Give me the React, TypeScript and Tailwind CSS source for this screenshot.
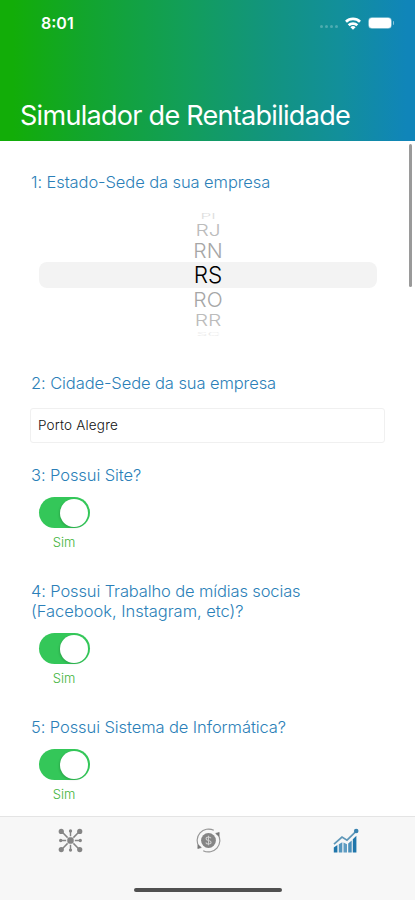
import type { ReactNode } from "react";

const wheel = [
  { code: "PI", row: "h-[10px] text-[#dddddd] text-[18px]", glyph: "leading-[10px] scale-y-[0.42] scale-x-[0.95]" },
  { code: "RJ", row: "h-[18px] text-[#bcbcbc]", glyph: "scale-y-[0.76]" },
  { code: "RN", row: "h-[23px] text-[#a6a6a6]", glyph: "scale-y-[0.96]" },
  { code: "RS", row: "h-[26px] text-black text-[22.5px]", glyph: "" },
  { code: "RO", row: "h-[23px] text-[#a6a6a6]", glyph: "scale-y-[0.96]" },
  { code: "RR", row: "h-[18px] text-[#bcbcbc]", glyph: "scale-y-[0.76]" },
  { code: "SC", row: "h-[10px] text-[#e8e8e8] text-[18px]", glyph: "leading-[10px] scale-y-[0.3] scale-x-[0.95]" },
];

function Question({ children, className = "" }: { children: ReactNode; className?: string }) {
  return (
    <h2 className={`ml-[31px] whitespace-nowrap text-[16.5px] font-light leading-[20px] tracking-[-0.09px] text-[#2b7fb8] ${className}`}>
      {children}
    </h2>
  );
}

function Toggle() {
  return (
    <div className="ml-[39px] w-[51px]">
      <button role="switch" aria-checked="true" className="flex h-[31px] w-[51px] items-center justify-end rounded-full bg-[#34c759] pr-[2px]">
        <span className="size-[28px] rounded-full bg-white shadow-[-1px_1px_2px_rgba(0,0,0,0.15)]" />
      </button>
      <div className="mt-[6px] pr-px text-center text-[13px] font-light leading-[16px] text-[#3fb43c]">Sim</div>
    </div>
  );
}

function NetworkIcon() {
  return (
    <svg width="25" height="25" viewBox="0 0 26 26" fill="#858585" stroke="#858585" strokeWidth="1.5">
      <path d="M4 4l6 6M22 4l-6 6M4 22l6-6M22 22l-6-6M13 3v5.5M13 17.5V23M3 13h5.5M17.5 13H23" fill="none" />
      <rect x="10.4" y="10.4" width="5.2" height="5.2" rx="1.6" />
      <g stroke="none">
        <circle cx="3.4" cy="3.6" r="2.7" />
        <circle cx="22.6" cy="3.6" r="2.7" />
        <circle cx="3.4" cy="22.4" r="2.7" />
        <circle cx="22.6" cy="22.4" r="2.7" />
        <circle cx="13" cy="3" r="1.7" />
        <circle cx="13" cy="23" r="1.7" />
        <circle cx="2.8" cy="13" r="1.7" />
        <circle cx="23.2" cy="13" r="1.7" />
      </g>
    </svg>
  );
}

function MoneyCycleIcon() {
  return (
    <svg width="25" height="25" viewBox="0 0 26 26" fill="none" stroke="#969696" strokeWidth="1.2">
      <circle cx="13" cy="13" r="7.7" fill="#858585" stroke="none" />
      <path d="M15.6 10.7c-.5-1-1.4-1.4-2.6-1.4-1.5 0-2.5.7-2.5 1.8 0 2.6 5.2 1.2 5.2 3.8 0 1.1-1.1 1.8-2.7 1.8-1.4 0-2.4-.6-2.8-1.6M13 8v10" stroke="#cfcfcf" strokeWidth="1.1" />
      <path d="M3.2 19.6A11.9 11.9 0 0 1 18.5 2.4M22.8 6.4A11.9 11.9 0 0 1 7.5 23.6" />
      <path d="M20.5 5.7l3.6-1-.2 3.8zM5.5 20.3l-3.6 1 .2-3.8z" fill="#777" stroke="#777" strokeWidth=".8" />
    </svg>
  );
}

function GrowthIcon() {
  return (
    <svg width="26" height="26" viewBox="0 0 26 26" fill="none">
      <g fill="#1f76ab">
        <path d="M.8 19.5l3.6-2.5v7.5H.8z" />
        <path d="M5.8 16.2l3.5-2v10.300H5.8z" opacity=".75" />
        <path d="M10.5 14.5l3.5 1.800v8.200h-3.500z" opacity=".7" />
        <path d="M15.200 15.500l3.500-3v12h-3.500z" opacity=".8" />
        <path d="M19.800 11.300L23.400 7.800V24.500h-3.600z" />
      </g>
      <path d="M1 16.200L9 9l5 3.200 9-8.900" stroke="#5f97b8" strokeWidth="1.700" />
      <circle cx="23.200" cy="3" r="2.300" fill="#3a83b0" />
    </svg>
  );
}

export default function App() {
  return (
    <div className="flex h-[900px] w-[415px] flex-col overflow-hidden bg-white font-['Inter','Liberation_Sans',sans-serif]">
      <header className="flex h-[141px] shrink-0 flex-col justify-between bg-[linear-gradient(90deg,#12ad08_3%,#12a52c_20%,#129e5a_45%,#12947f_65%,#128f9b_82%,#1085b9_98%)]">
        <div className="flex items-start justify-between pl-[41px] pr-[21px] pt-[13px]">
          <span className="text-[16px] font-semibold leading-[20px] text-white">8:01</span>
          <div className="flex h-[20px] items-center">
            <div className="mr-[7px] mt-[7px] flex gap-[2px]">
              {[0, 1, 2, 3].map((dot) => (
                <span key={dot} className="size-[3px] rounded-full bg-white/25" />
              ))}
            </div>
            <svg width="16" height="13" viewBox="0 0 16 13" fill="none" stroke="white" strokeWidth="2.7">
              <path d="M1 4.8a10 10 0 0 1 14 0" />
              <path d="M3.7 8.3a6.2 6.2 0 0 1 8.6 0" />
              <path d="M8 12.8L5.4 10.2a3.7 3.7 0 0 1 5.2 0z" fill="white" stroke="none" />
            </svg>
            <div className="ml-[7px] flex h-[12px] w-[24px] items-center rounded-[4px] border border-white/40">
              <span className="h-full w-full rounded-[2.5px] bg-white" />
            </div>
            <span className="ml-px h-[4px] w-[1.5px] rounded-r-full bg-white/50" />
          </div>
        </div>
        <h1 className="mb-[8px] ml-[20px] whitespace-nowrap text-[27px] leading-[34px] tracking-[-0.71px] text-white">
          Simulador de Rentabilidade
        </h1>
      </header>

      <main className="flex min-h-0 flex-1 overflow-hidden">
        <div className="w-[409px] shrink-0">
          <Question className="mt-[31px]">1: Estado-Sede da sua empresa</Question>
          <div className="ml-[39px] mt-[19px] flex w-[338px] flex-col">
            {wheel.map((item) => (
              <div
                key={item.code}
                className={`flex items-center justify-center font-light leading-none ${item.row} ${
                  item.code === "RS" ? "rounded-[8px] bg-[#f3f3f3]" : item.code === "PI" || item.code === "SC" ? "" : "text-[21px]"
                }`}
              >
                <span className={item.glyph}>{item.code}</span>
              </div>
            ))}
          </div>
          <Question className="mt-[34px]">2: Cidade-Sede da sua empresa</Question>
          <div className="ml-[30px] mt-[15px] flex h-[35px] w-[355px] items-center rounded-[3px] border border-[#f0f0f0] px-[7px] text-[13.5px] font-light tracking-[0.18px] text-[#111]">
            Porto Alegre
          </div>
          <Question className="mb-[12px] mt-[22px]">3: Possui Site?</Question>
          <Toggle />
          <Question className="mb-[12px] mt-[31px]">
            <span className="tracking-[-0.13px]">4: Possui Trabalho de mídias socias</span>
            <br />
            <span className="tracking-[-0.02px]">(Facebook, Instagram, etc)?</span>
          </Question>
          <Toggle />
          <Question className="mb-[12px] mt-[31px]">5: Possui Sistema de Informática?</Question>
          <Toggle />
        </div>
        <div className="mt-[3px] h-[143px] w-[3px] rounded-full bg-[#9a9a9a]" />
      </main>

      <footer className="flex h-[84px] shrink-0 flex-col items-center justify-between border-t border-[#e4e4e4] bg-[#f7f7f7]">
        <nav className="grid w-full grid-cols-3 justify-items-center pl-px pt-[11px]">
          <NetworkIcon />
          <MoneyCycleIcon />
          <GrowthIcon />
        </nav>
        <div className="mb-[8px] h-[4px] w-[148px] rounded-full bg-[#505050]" />
      </footer>
    </div>
  );
}
